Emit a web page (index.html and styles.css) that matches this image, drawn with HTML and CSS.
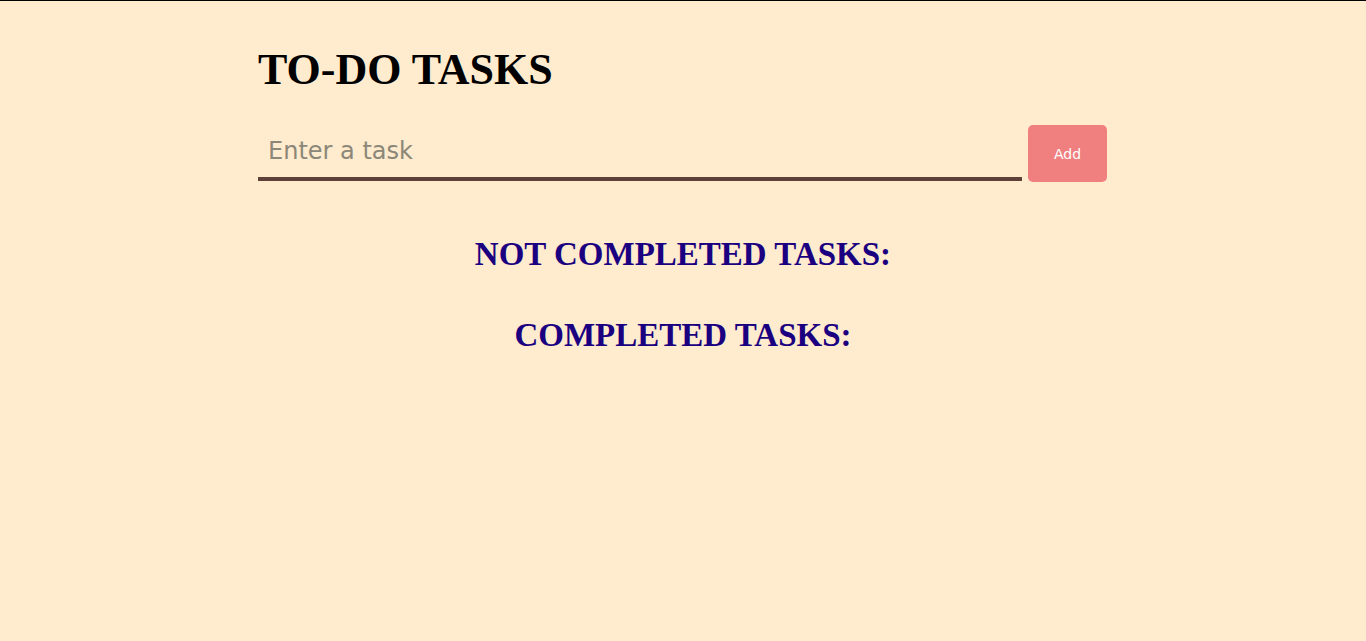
FILE: index.html
```html
<!DOCTYPE html>
<html>
<head>
<meta charset="utf-8">
<link rel="stylesheet" href="styles.css">
</head>
<body>
<div class="page">
  <h1 class="title">TO-DO TASKS</h1>
  <div class="entry">
    <input class="task-input" type="text" placeholder="Enter a task" autofocus>
    <button class="add-btn">Add</button>
  </div>
  <h2 class="section">NOT COMPLETED TASKS:</h2>
  <ul class="list"></ul>
  <h2 class="section">COMPLETED TASKS:</h2>
  <ul class="list"></ul>
</div>
</body>
</html>
```
FILE: styles.css
```css
html, body {
  margin: 0;
  padding: 0;
  height: 100%;
}
body {
  background: #ffebcd;
  border-top: 1px solid #000;
  box-sizing: border-box;
  font-family: "Liberation Serif", "Times New Roman", serif;
}
.page {
  width: 850px;
  margin: 0 auto;
  padding-top: 44px;
}
.title {
  margin: 0;
  font-size: 44px;
  font-weight: bold;
  line-height: 50px;
  color: #000;
}
.entry {
  display: flex;
  align-items: flex-end;
  gap: 6px;
  margin-top: 30px;
}
.task-input {
  flex: 1;
  height: 52px;
  box-sizing: border-box;
  background: transparent;
  border: none;
  border-bottom: 4px solid #5d4037;
  outline: none;
  padding: 0 10px 4px;
  font-family: "DejaVu Sans", Verdana, sans-serif;
  font-size: 24px;
  color: #333;
}
.task-input::placeholder {
  color: #8c8778;
}
.add-btn {
  width: 79px;
  height: 57px;
  margin: 0 1px -1px 0;
  background: #f08080;
  border: none;
  border-radius: 5px;
  color: #fff;
  font-family: "DejaVu Sans", Verdana, sans-serif;
  font-size: 14px;
  padding: 0;
}
.section {
  text-align: center;
  color: #1a0080;
  font-size: 33px;
  line-height: 37px;
  margin: 55px 0 0;
}
.section + .list + .section {
  margin-top: 44px;
}
.list {
  margin: 0;
  padding: 0;
  list-style: none;
}
```
